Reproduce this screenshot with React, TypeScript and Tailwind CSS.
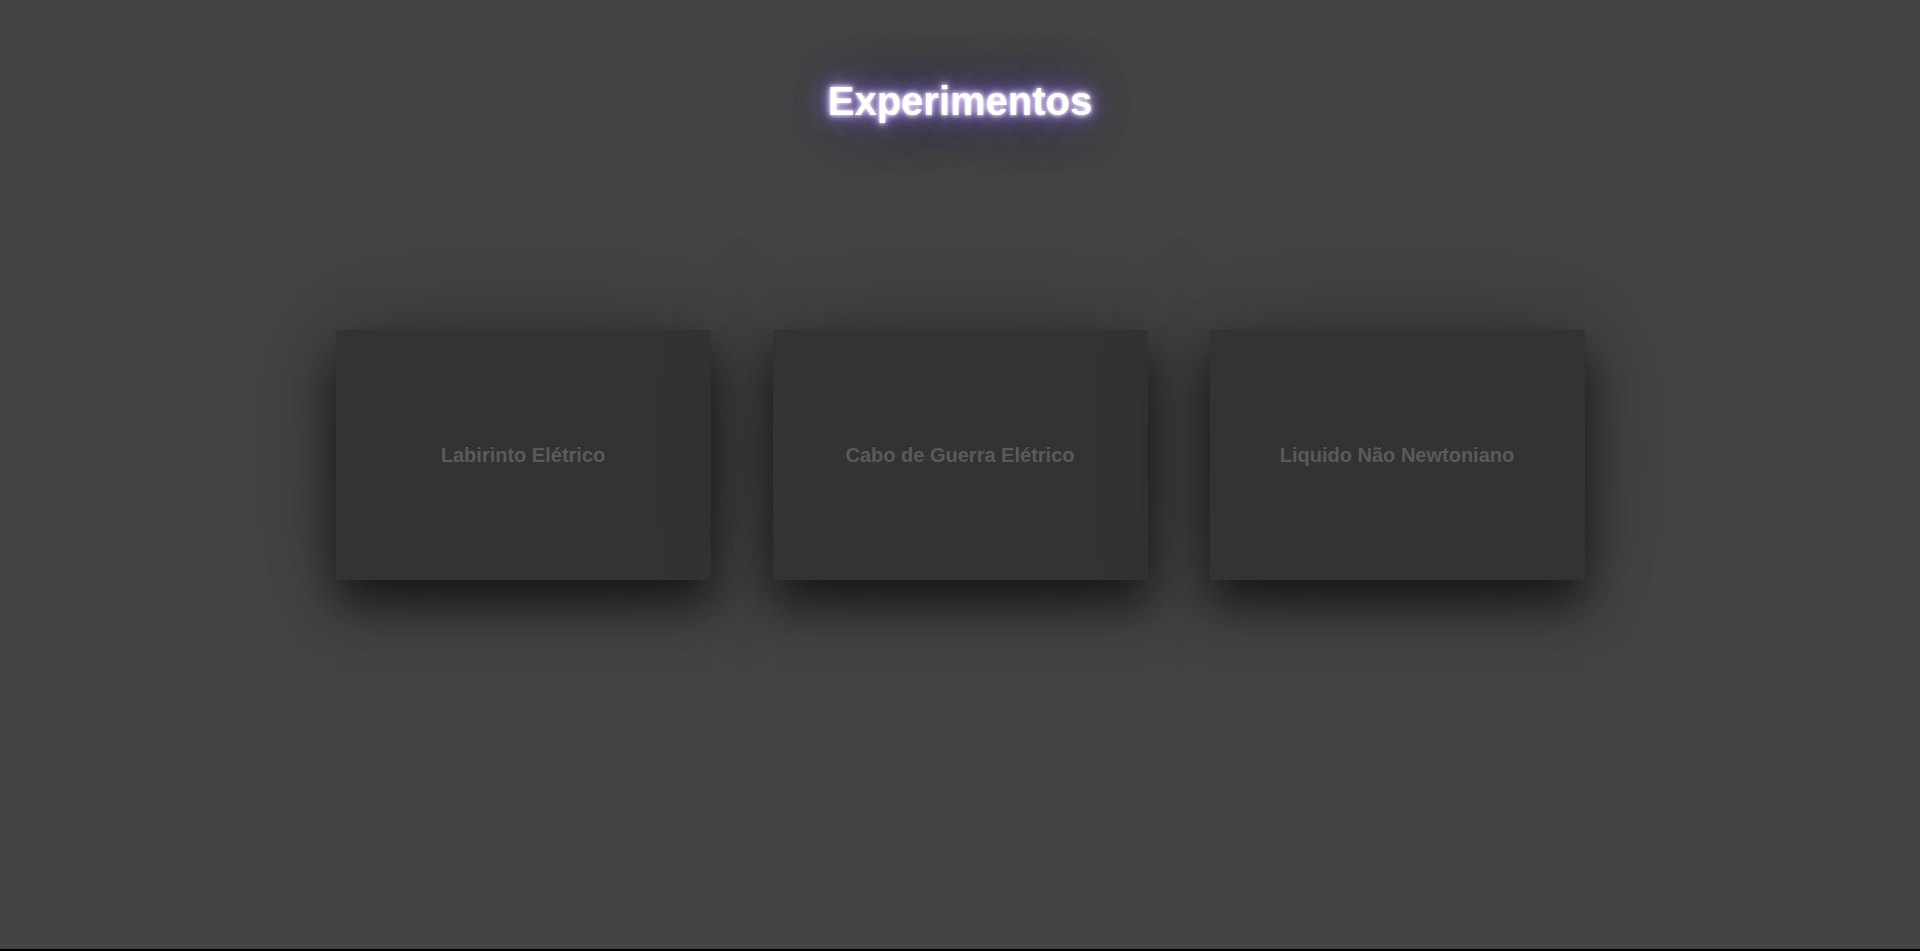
const experiments = ["Labirinto Elétrico", "Cabo de Guerra Elétrico", "Liquido Não Newtoniano"];

export default function App() {
  return (
    <div
      className="box-border flex h-[951px] flex-col items-center border-b-2 border-black bg-[#444444]"
      style={{ fontFamily: '"Liberation Sans", Arial, sans-serif' }}
    >
      <h1 className="pt-[78px] text-[40px] font-bold leading-[46px] text-white [text-shadow:0_0_4px_#fff,0_0_10px_#e0c8ff,0_0_20px_#9b6cf0,0_0_36px_rgba(110,90,230,0.7),0_0_60px_rgba(50,80,150,0.6)]">
        Experimentos
      </h1>
      <div className="mt-[206px] flex gap-[62px]">
        {experiments.map((name) => (
          <div
            key={name}
            className="flex h-[250px] w-[375px] items-center justify-center bg-[#333333] shadow-[0_25px_45px_rgba(0,0,0,0.6),0_0_110px_rgba(0,0,0,0.25)]"
          >
            <span className="text-[20px] font-bold text-[#5a5a5a]">{name}</span>
          </div>
        ))}
      </div>
    </div>
  );
}
